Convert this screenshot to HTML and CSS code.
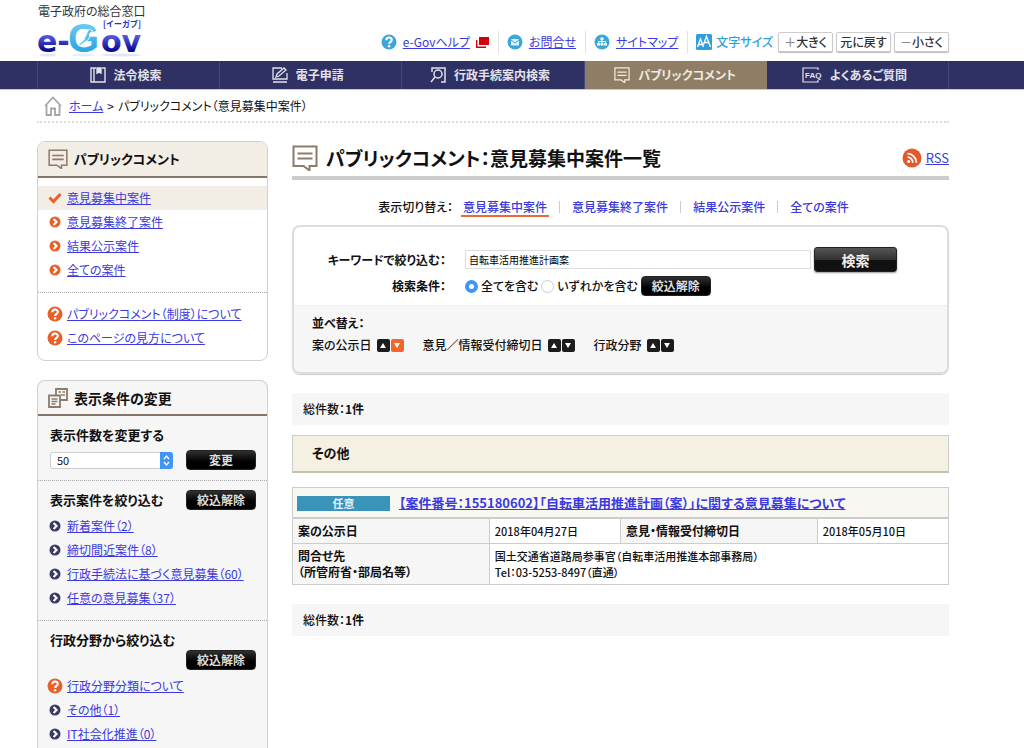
FILE: index.html
```html
<!DOCTYPE html>
<html lang="ja">
<head>
<meta charset="utf-8">
<title>パブリックコメント：意見募集中案件一覧</title>
<link rel="stylesheet" href="styles.css">
</head>
<body>
<svg class="defs" aria-hidden="true">
  <symbol id="arrow" viewBox="0 0 12 12"><circle cx="6" cy="6" r="5.5" fill="currentColor"/><path d="M4.6 3l3 3-3 3" fill="none" stroke="#fff" stroke-width="2"/></symbol>
  <symbol id="question" viewBox="0 0 16 16"><circle cx="8" cy="8" r="7.5" fill="currentColor"/><path d="M5.3 6.2c0-3.4 5.5-3.4 5.5-.3 0 2-2.6 2-2.6 4" fill="none" stroke="#fff" stroke-width="2"/><circle cx="8.1" cy="12.2" r="1.2" fill="#fff"/></symbol>
  <symbol id="comment" viewBox="0 0 26 26"><path d="M1.500 1.500h23v19.500h-7v4.500l-6-4.500H1.500z" fill="none" stroke="currentColor" stroke-width="2"/><path d="M5.500 8.500h15M5.500 13.500h15" stroke="currentColor" stroke-width="2"/></symbol>
</svg>

<header class="header">
  <a class="brand" href="#" aria-label="電子政府の総合窓口 e-Gov イーガブ">
    <span class="tagline">電子政府の総合窓口</span>
    <svg class="logo" viewBox="0 0 108 38">
      <defs>
        <linearGradient id="navy" x1="0" y1="0" x2="0" y2="1"><stop offset="0.300" stop-color="#5a62e6"/><stop offset="0.750" stop-color="#0c0c90"/></linearGradient>
        <linearGradient id="sky" x1="0" y1="0" x2="0" y2="1"><stop offset="0" stop-color="#7ed6f7"/><stop offset="1" stop-color="#1698dc"/></linearGradient>
      </defs>
      <ellipse cx="11" cy="36" rx="9" ry="1.500" fill="#e3e4f5"/><ellipse cx="46" cy="36" rx="12" ry="1.500" fill="#dff2fb"/><ellipse cx="84" cy="36" rx="20" ry="1.500" fill="#e3e4f5"/>
      <text class="word" x="0" y="33" fill="url(#navy)">e-</text>
      <text class="big" x="31" y="33" fill="url(#sky)">G</text>
      <text class="word" x="64" y="33" fill="url(#navy)">ov</text>
      <path d="M52 10l4 2-3 2-1 6-4 3-6 4v-2l5-4 2-5z" fill="#55bdf0" stroke="#fff" stroke-width=".8"/>
      <text class="kana" x="66" y="8" fill="#2a2fb5">[イーガブ]</text>
    </svg>
  </a>
  <div class="tools">
    <div class="tool">
      <svg class="ic16 sky" viewBox="0 0 16 16"><use href="#question"/></svg>
      <a href="#">e-Govヘルプ</a>
      <svg class="window" viewBox="0 0 13 11"><path d="M3 0h10v8H3z" fill="#d3000f"/><path d="M.7 3v7.300H10" fill="none" stroke="#d3000f" stroke-width="1.400"/></svg>
    </div>
    <div class="tool">
      <svg class="ic16" viewBox="0 0 16 16"><circle cx="8" cy="8" r="7.500" fill="#3aa6da"/><rect x="4" y="5" width="8" height="6.500" rx="1" fill="#dff3fc"/><path d="M4 6l4 3 4-3" fill="none" stroke="#3aa6da"/></svg>
      <a href="#">お問合せ</a>
    </div>
    <div class="tool">
      <svg class="ic16" viewBox="0 0 16 16"><circle cx="8" cy="8" r="7.500" fill="#3aa6da"/><path d="M6.500 3.500h3v2.500h-3zM3 9h3v2.500H3zM6.500 9h3v2.500h-3zM10 9h3v2.500h-3z" fill="#fff"/><path d="M8 6v3M4.500 9V7.500h7V9" stroke="#fff" fill="none"/></svg>
      <a href="#">サイトマップ</a>
    </div>
    <div class="sizes">
      <svg class="ic16" viewBox="0 0 16 16"><rect width="16" height="16" rx="1.500" fill="#2e9fdc"/><path d="M1.500 13L4.500 5l3 8M2.600 10.500h3.800M7.500 10.500l3-8 4 10.500M8.600 8.500h4.200" fill="none" stroke="#fff" stroke-width="1.400"/></svg>
      <span class="size-label">文字サイズ</span>
      <button class="size" type="button"><span class="sign">＋</span>大きく</button>
      <button class="size" type="button">元に戻す</button>
      <button class="size" type="button"><span class="sign">－</span>小さく</button>
    </div>
  </div>
</header>

<nav class="nav">
  <div class="nav-grid">
    <a class="nav-item" href="#"><svg class="ic16" viewBox="0 0 16 16" fill="none" stroke="currentColor" stroke-width="1.400"><path d="M6 1H1v14h14V1h-3"/><path d="M7 1h4v5L9 5 7 6z" fill="currentColor"/><path d="M4 1v14"/></svg>法令検索</a>
    <a class="nav-item" href="#"><svg class="ic16" viewBox="0 0 16 16" fill="none" stroke="currentColor" stroke-width="1.300"><path d="M10 1H1v11h14V6M1 15h14M4 10l1-3 7-6 2 2-7 6z"/></svg>電子申請</a>
    <a class="nav-item" href="#"><svg class="ic16" viewBox="0 0 16 16" fill="none" stroke="currentColor" stroke-width="1.500"><path d="M2 5V1h13v14h-4"/><circle cx="8" cy="7" r="4"/><path d="M5 10l-4 5"/></svg>行政手続案内検索</a>
    <a class="nav-item active" href="#"><svg class="ic16" viewBox="0 0 26 26"><use href="#comment"/></svg>パブリックコメント</a>
    <a class="nav-item" href="#"><svg class="faq" viewBox="0 0 20 16"><path d="M16 3V1H1v14h15v-2" fill="none" stroke="currentColor" stroke-width="1.200"/><text x="3" y="11" fill="currentColor">FAQ</text></svg>よくあるご質問</a>
  </div>
</nav>

<div class="page">
  <div class="crumbs">
    <svg class="home" viewBox="0 0 18 20" fill="none" stroke="#a5a5a5" stroke-width="1.800"><path d="M1 10L9 1.500 17 10M2.500 9v10H7v-6.500h4V19h4.500V9"/></svg>
    <a href="#">ホーム</a><span>&gt;</span><span>パブリックコメント（意見募集中案件）</span>
  </div>

  <div class="columns">
    <aside class="side">
      <section class="box">
        <h2 class="box-title beige"><svg class="ic20" viewBox="0 0 26 26"><use href="#comment"/></svg>パブリックコメント</h2>
        <ul class="links first">
          <li class="current"><svg class="check" viewBox="0 0 14 12"><path d="M1.500 5.500l4 4L12.500 2" fill="none" stroke="currentColor" stroke-width="3"/></svg><a href="#">意見募集中案件</a></li>
          <li><svg class="ic12"><use href="#arrow"/></svg><a href="#">意見募集終了案件</a></li>
          <li><svg class="ic12"><use href="#arrow"/></svg><a href="#">結果公示案件</a></li>
          <li><svg class="ic12"><use href="#arrow"/></svg><a href="#">全ての案件</a></li>
        </ul>
        <ul class="links help">
          <li><svg class="ic16"><use href="#question"/></svg><a href="#">パブリックコメント（制度）について</a></li>
          <li><svg class="ic16"><use href="#question"/></svg><a href="#">このページの見方について</a></li>
        </ul>
      </section>

      <section class="box grey">
        <h2 class="box-title"><svg class="ic20" viewBox="0 0 20 20" fill="#f6f6f6" stroke="currentColor" stroke-width="1.800"><path d="M8 1h11v11H8z"/><path d="M10.500 4h2.500M14.500 4h2.500M13 7h4" stroke-width="1.400"/><path d="M1 7.500h11V19H1z"/><path d="M3.500 11h6M3.500 13.500h6M3.500 16h4" stroke-width="1.400"/></svg>表示条件の変更</h2>
        <div class="group">
          <h3><label for="per-page">表示件数を変更する</label></h3>
          <div class="count-row">
            <span class="select-wrap">
              <select id="per-page"><option>50</option></select>
              <svg class="stepper" viewBox="0 0 13 17"><path d="M4 7l2.500-3L9 7M4 10l2.500 3L9 10" fill="none" stroke="#fff" stroke-width="1.300"/></svg>
            </span>
            <button class="dark" type="button">変更</button>
          </div>
        </div>
        <div class="group">
          <div class="head-row"><h3>表示案件を絞り込む</h3><button class="dark" type="button">絞込解除</button></div>
          <ul class="links navy">
            <li><svg class="ic12"><use href="#arrow"/></svg><a href="#">新着案件（2）</a></li>
            <li><svg class="ic12"><use href="#arrow"/></svg><a href="#">締切間近案件（8）</a></li>
            <li><svg class="ic12"><use href="#arrow"/></svg><a href="#">行政手続法に基づく意見募集（60）</a></li>
            <li><svg class="ic12"><use href="#arrow"/></svg><a href="#">任意の意見募集（37）</a></li>
          </ul>
        </div>
        <div class="group">
          <h3>行政分野から絞り込む</h3>
          <div class="release"><button class="dark" type="button">絞込解除</button></div>
          <ul class="links navy">
            <li><svg class="ic16"><use href="#question"/></svg><a href="#">行政分野分類について</a></li>
            <li><svg class="ic12"><use href="#arrow"/></svg><a href="#">その他（1）</a></li>
            <li><svg class="ic12"><use href="#arrow"/></svg><a href="#">IT社会化推進（0）</a></li>
          </ul>
        </div>
      </section>
    </aside>

    <main class="main">
      <div class="title-row">
        <svg class="ic26" viewBox="0 0 26 26"><use href="#comment"/></svg>
        <h1>パブリックコメント：意見募集中案件一覧</h1>
        <svg class="rss-icon" viewBox="0 0 20 20"><circle cx="10" cy="10" r="9.500" fill="#e2592b"/><circle cx="6.700" cy="13.500" r="1.500" fill="#fff"/><path d="M5.500 9.200a5.300 5.300 0 0 1 5.300 5.500M5.500 5.700a8.800 8.800 0 0 1 8.800 9" fill="none" stroke="#fff" stroke-width="1.800"/></svg>
        <a class="rss" href="#">RSS</a>
      </div>

      <div class="switch">
        <span>表示切り替え：</span>
        <ul>
          <li><a class="on" href="#">意見募集中案件</a></li>
          <li><a href="#">意見募集終了案件</a></li>
          <li><a href="#">結果公示案件</a></li>
          <li><a href="#">全ての案件</a></li>
        </ul>
      </div>

      <form class="panel">
        <div class="filters">
          <label class="name" for="keyword">キーワードで絞り込む：</label>
          <div class="field">
            <input class="keyword" id="keyword" type="text" value="自転車活用推進計画案">
            <button class="search" type="button">検索</button>
          </div>
          <span class="name">検索条件：</span>
          <div class="field radios">
            <label><input type="radio" name="mode" checked>全てを含む</label>
            <label><input type="radio" name="mode">いずれかを含む</label>
            <button class="dark" type="button">絞込解除</button>
          </div>
        </div>
        <div class="sort">
          <strong>並べ替え：</strong>
          <div class="sort-row">
            <span class="sort-key">案の公示日 <span class="pair"><button type="button" aria-label="公示日 昇順"><svg viewBox="0 0 6 5"><path d="M3 0l3 5H0z"/></svg></button><button class="hot" type="button" aria-label="公示日 降順"><svg viewBox="0 0 6 5"><path d="M0 0h6L3 5z"/></svg></button></span></span>
            <span class="sort-key">意見／情報受付締切日 <span class="pair"><button type="button" aria-label="締切日 昇順"><svg viewBox="0 0 6 5"><path d="M3 0l3 5H0z"/></svg></button><button type="button" aria-label="締切日 降順"><svg viewBox="0 0 6 5"><path d="M0 0h6L3 5z"/></svg></button></span></span>
            <span class="sort-key">行政分野 <span class="pair"><button type="button" aria-label="行政分野 昇順"><svg viewBox="0 0 6 5"><path d="M3 0l3 5H0z"/></svg></button><button type="button" aria-label="行政分野 降順"><svg viewBox="0 0 6 5"><path d="M0 0h6L3 5z"/></svg></button></span></span>
          </div>
        </div>
      </form>

      <p class="total">総件数：<strong>1件</strong></p>
      <h2 class="category">その他</h2>
      <table class="case">
        <colgroup><col class="col-name"><col class="col-value"><col class="col-name"><col class="col-value"></colgroup>
        <tr class="case-head"><td colspan="4"><div class="case-title"><span class="badge">任意</span><a href="#">【案件番号：155180602】「自転車活用推進計画（案）」に関する意見募集について</a></div></td></tr>
        <tr><th>案の公示日</th><td>2018年04月27日</td><th>意見・情報受付締切日</th><td>2018年05月10日</td></tr>
        <tr><th>問合せ先<br>（所管府省・部局名等）</th><td colspan="3">国土交通省道路局参事官（自転車活用推進本部事務局）<br>Tel：03-5253-8497（直通）</td></tr>
      </table>
      <p class="total">総件数：<strong>1件</strong></p>
    </main>
  </div>
</div>
</body>
</html>
```

FILE: styles.css
```css
* { box-sizing: border-box; }
body {
  margin: 0;
  background: #fff;
  color: #111;
  font: 12px/16px "Noto Sans CJK JP", sans-serif;
  font-feature-settings: "palt";
}
h1, h2, h3, p, ul { margin: 0; padding: 0; }
ul { list-style: none; }
a { color: #3a3ae0; }
button, input, select { font: inherit; font-feature-settings: inherit; margin: 0; }
button { display: inline-flex; align-items: center; justify-content: center; padding: 0; white-space: nowrap; }
svg { display: block; flex: none; }
.defs { position: absolute; width: 0; height: 0; }
.ic12 { width: 12px; height: 12px; }
.ic16 { width: 16px; height: 16px; }
.ic20 { width: 20px; height: 20px; }
.ic26 { width: 26px; height: 26px; color: #8d7b6b; }
.sky { color: #3aa6da; }

/* header */
.header {
  display: flex;
  justify-content: space-between;
  align-items: flex-start;
  height: 61px;
  padding: 3px 75px 0 37px;
}
.brand { display: block; color: #333; text-decoration: none; }
.tagline { display: block; font-size: 12px; line-height: 16px; padding-left: 1px; }
.logo { width: 108px; height: 38px; overflow: visible; }
.word { font: bold 30px "DejaVu Sans", sans-serif; }
.big { font: bold 40px "Liberation Sans", sans-serif; }
.kana { font: bold 8px "Noto Sans CJK JP", sans-serif; }
.tools { display: flex; align-items: center; padding-top: 28px; }
.tool, .sizes { display: flex; align-items: center; height: 22px; }
.tool { gap: 6px; padding-right: 9px; margin-right: 8px; border-right: 1px solid #e2e2e2; }
.window { width: 13px; height: 11px; }
.sizes { gap: 4px; }
.size-label { color: #2e9fdc; font-weight: 500; padding-right: 1px; }
.size {
  width: 55px;
  height: 20px;
  background: #fff;
  border: 1px solid #ccc;
  border-radius: 2px;
  box-shadow: 0 1px 1px #bbb;
  color: #333;
  font-weight: 500;
}
.size + .size { margin-left: -1px; }
.sign { color: #888; }

/* global navigation */
.nav { background: #2f3063; border-bottom: 1px solid #c9c9d8; padding: 0 75px 0 37px; }
.nav-grid { display: grid; grid-template-columns: repeat(5, 1fr); border-left: 1px solid #45467a; }
.nav-item {
  display: flex;
  align-items: center;
  justify-content: center;
  gap: 8px;
  height: 28px;
  padding-right: 6px;
  border-right: 1px solid #45467a;
  color: #e2e2ea;
  font-weight: bold;
  text-decoration: none;
}
.nav-item.active { padding-right: 0; background: #8f7d65; color: #f0ebe2; border-color: #8f7d65; }
.faq { width: 20px; height: 16px; }
.faq text { font: bold 8px "Liberation Sans", sans-serif; }

.page { padding: 0 75px 0 37px; }
.crumbs {
  display: flex;
  align-items: center;
  gap: 4px;
  height: 33px;
  padding-left: 7px;
  border-bottom: 2px dotted #ddd;
}
.home { width: 18px; height: 20px; margin-right: 3px; }
.columns { display: flex; align-items: flex-start; gap: 24px; padding-top: 18px; }

/* sidebar */
.side { display: flex; flex-direction: column; flex: none; width: 231px; gap: 19px; }
.box { border: 1px solid #d0d0d0; border-radius: 8px; overflow: hidden; }
.box.grey { background: #f6f6f6; border-bottom: 0; border-radius: 8px 8px 0 0; }
.box-title {
  display: flex;
  align-items: center;
  gap: 6px;
  height: 36px;
  padding: 0 10px;
  border-bottom: 2px solid #857468;
  font-size: 13px;
}
.grey .box-title { font-size: 14px; height: 35px; }
.box-title svg { color: #8d7b6b; }
.beige { background: #f2ede5; }
.links li { display: flex; align-items: center; height: 24px; gap: 4px; padding-left: 9px; }
.links svg { color: #e8602a; }
.links .ic12 { margin: 0 2px; }
.links .check { width: 14px; height: 12px; margin: 0 1px; }
.links.navy .ic12 { color: #3a3c66; }
.links.first { padding: 8px 0 10px; }
.current { background: #f2ede5; }
.links.help { padding: 9px 0 10px; border-top: 1px dotted #aaa; }
.group { padding: 9px 0 10px; }
.group + .group { border-top: 1px dotted #aaa; }
.group h3 { font-size: 13px; line-height: 20px; padding-left: 12px; }
.count-row { display: flex; justify-content: space-between; align-items: center; padding: 5px 11px 0 12px; }
.select-wrap { position: relative; }
.select-wrap select {
  display: block;
  appearance: none;
  width: 123px;
  height: 17px;
  padding: 0 6px;
  border: 1px solid #ccc;
  border-radius: 3px;
  background: #fff;
  font-size: 11px;
  line-height: 15px;
  color: #111;
}
.stepper { position: absolute; right: 0; top: 0; width: 13px; height: 17px; background: #3f96f7; border-radius: 0 3px 3px 0; pointer-events: none; }
.dark {
  width: 70px;
  height: 20px;
  background: linear-gradient(#303030, #000 60%);
  border: 1px solid #222;
  border-radius: 4px;
  color: #ddd;
  font-weight: bold;
}
.head-row { display: flex; justify-content: space-between; align-items: center; padding: 0 11px 4px 0; }
.release { display: flex; justify-content: flex-end; padding: 0 11px 4px 0; }

/* main column */
.main { flex: 1; min-width: 0; }
.title-row { display: flex; align-items: center; height: 39px; padding-bottom: 2px; border-bottom: 4px solid #ccc; }
.title-row h1 { flex: 1; padding-left: 8px; font-size: 19px; line-height: 28px; }
.rss-icon { width: 20px; height: 20px; }
.rss { font-size: 13px; padding-left: 4px; }
.switch { display: flex; align-items: center; justify-content: center; height: 45px; padding: 8px 12px 0 0; gap: 8px; font-weight: 500; }
.switch ul { display: flex; }
.switch li + li { display: flex; align-items: center; }
.switch li + li::before { content: ""; height: 12px; border-left: 1px solid #ccc; margin: 0 10px; }
.switch li a { display: block; padding: 2px 2px 0; text-decoration: none; border-bottom: 2px solid transparent; }
.switch li a.on { border-color: #ee6a35; }
.panel { border: 2px solid #ddd; border-radius: 8px; overflow: hidden; box-shadow: 0 1px 1px #ccc; }
.filters { display: grid; grid-template-columns: 152px 1fr; column-gap: 19px; row-gap: 4px; padding: 20px 50px 9px 0; align-items: center; }
.name { text-align: right; font-weight: bold; white-space: nowrap; }
.field { display: flex; align-items: center; gap: 3px; }
.keyword { flex: 1; min-width: 0; height: 19px; padding: 0 3px; border: 1px solid #ddd; font-size: 10px; }
.search {
  width: 83px;
  height: 25px;
  border: 1px solid #222;
  border-radius: 3px;
  background: linear-gradient(#555, #333 50%, #111 51%);
  box-shadow: 0 1px 2px #999;
  color: #eee;
  font-size: 14px;
  font-weight: bold;
}
.radios { font-weight: 500; }
.radios label { display: flex; align-items: center; gap: 3px; }
.radios input { appearance: none; width: 13px; height: 13px; border: 1px solid #ccc; border-radius: 50%; background: #fff; }
.radios input:checked { border: 4px solid #3d95f5; }
.sort { background: #f6f6f6; border-top: 1px solid #eee; padding: 9px 18px 19px; }
.sort strong { display: block; }
.sort-row { display: flex; gap: 19px; padding-top: 6px; font-weight: 500; }
.sort-key { display: flex; align-items: center; gap: 5px; }
.pair { display: flex; gap: 1px; }
.pair button { width: 13px; height: 13px; border: 0; border-radius: 2px; background: #1c1c1c; }
.pair .hot { background: #f2662b; }
.pair svg { width: 6px; height: 5px; fill: #fff; }
.total { margin: 19px 0 10px; padding: 8px 11px; background: #f6f6f6; font-weight: 500; }
.category { padding: 8px 19px 9px; border: 1px solid #ccc; border-bottom: 2px solid #c5bfae; background: #f4f0e2; font-size: 13px; line-height: 18px; }
.case { width: 100%; margin-top: 14px; border-collapse: collapse; table-layout: fixed; }
.col-name { width: 30%; }
.col-value { width: 20%; }
.case th, .case td { border: 1px solid #ccc; padding: 4px 5px; text-align: left; vertical-align: top; font-size: 11px; line-height: 16px; font-weight: 500; }
.case th { background: #f6f6f6; font-size: 12px; font-weight: bold; }
.case .case-head td { background: #f8f7f2; padding: 7px 4px 6px; border-bottom: 2px solid #ccc; }
.case-title { display: flex; align-items: center; gap: 9px; }
.case-title a { font-size: 13px; font-weight: bold; white-space: nowrap; }
.badge { width: 93px; background: #3a94b9; color: #e4f3fa; font-weight: bold; text-align: center; line-height: 15px; }
```
